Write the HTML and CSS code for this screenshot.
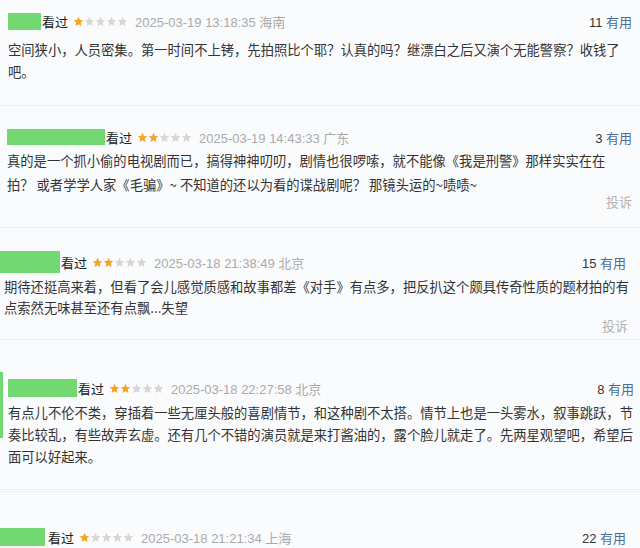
FILE: index.html
```html
<!DOCTYPE html>
<html lang="zh">
<head>
<meta charset="utf-8">
<link rel="stylesheet" href="styles.css">
</head>
<body>
<svg width="0" height="0" class="defs">
  <defs>
    <symbol id="star" viewBox="0 0 24 24"><path d="M12 1.8l3.1 6.9 7.4.7-5.6 5 1.7 7.4L12 17.9l-6.6 3.9 1.7-7.4-5.6-5 7.4-.7z"/></symbol>
  </defs>
</svg>
<div class="page">
  <section class="c c1">
    <div class="meta">
      <span class="avatar a1"></span><span class="seen">看过</span>
      <span class="stars"><svg class="on"><use href="#star"/></svg><svg><use href="#star"/></svg><svg><use href="#star"/></svg><svg><use href="#star"/></svg><svg><use href="#star"/></svg></span>
      <span class="date">2025-03-19 13:18:35 海南</span>
      <span class="useful"><b>11</b> 有用</span>
    </div>
    <p class="text">空间狭小，人员密集。第一时间不上铐，先拍照比个耶？认真的吗？继漂白之后又演个无能警察？收钱了<br>吧。</p>
  </section>
  <section class="c c2">
    <div class="meta">
      <span class="avatar a2"></span><span class="seen">看过</span>
      <span class="stars"><svg class="on"><use href="#star"/></svg><svg class="on"><use href="#star"/></svg><svg><use href="#star"/></svg><svg><use href="#star"/></svg><svg><use href="#star"/></svg></span>
      <span class="date">2025-03-19 14:43:33 广东</span>
      <span class="useful"><b>3</b> 有用</span>
    </div>
    <p class="text">真的是一个抓小偷的电视剧而已，搞得神神叨叨，剧情也很啰嗦，就不能像《我是刑警》那样实实在在<br>拍？ 或者学学人家《毛骗》~ 不知道的还以为看的谍战剧呢？ 那镜头运的~啧啧~</p>
    <div class="report">投诉</div>
  </section>
  <section class="c c3">
    <div class="meta">
      <span class="avatar a3"></span><span class="seen">看过</span>
      <span class="stars"><svg class="on"><use href="#star"/></svg><svg class="on"><use href="#star"/></svg><svg><use href="#star"/></svg><svg><use href="#star"/></svg><svg><use href="#star"/></svg></span>
      <span class="date">2025-03-18 21:38:49 北京</span>
      <span class="useful"><b>15</b> 有用</span>
    </div>
    <p class="text">期待还挺高来着，但看了会儿感觉质感和故事都差《对手》有点多，把反扒这个颇具传奇性质的题材拍的有<br>点索然无味甚至还有点飘...失望</p>
    <div class="report">投诉</div>
  </section>
  <section class="c c4">
    <div class="meta">
      <span class="avatar a4"></span><span class="seen">看过</span>
      <span class="stars"><svg class="on"><use href="#star"/></svg><svg class="on"><use href="#star"/></svg><svg><use href="#star"/></svg><svg><use href="#star"/></svg><svg><use href="#star"/></svg></span>
      <span class="date">2025-03-18 22:27:58 北京</span>
      <span class="useful"><b>8</b> 有用</span>
    </div>
    <p class="text">有点儿不伦不类，穿插着一些无厘头般的喜剧情节，和这种剧不太搭。情节上也是一头雾水，叙事跳跃，节<br>奏比较乱，有些故弄玄虚。还有几个不错的演员就是来打酱油的，露个脸儿就走了。先两星观望吧，希望后<br>面可以好起来。</p>
  </section>
  <section class="c c5">
    <div class="meta">
      <span class="avatar a5"></span><span class="seen">看过</span>
      <span class="stars"><svg class="on"><use href="#star"/></svg><svg><use href="#star"/></svg><svg><use href="#star"/></svg><svg><use href="#star"/></svg><svg><use href="#star"/></svg></span>
      <span class="date">2025-03-18 21:21:34 上海</span>
      <span class="useful"><b>22</b> 有用</span>
    </div>
  </section>
</div>
</body>
</html>
```
FILE: styles.css
```css
html, body {
  margin: 0;
  padding: 0;
  background: #fafbfd;
}
.defs { position: absolute; }
.page {
  width: 640px;
  height: 548px;
  overflow: hidden;
  display: flex;
  flex-direction: column;
  font-family: "Liberation Sans", "Noto Sans CJK SC", sans-serif;
  color: #333;
}
.c {
  border-bottom: 1px solid #eceef2;
}
.meta {
  display: flex;
  align-items: center;
  height: 22px;
  font-size: 13px;
}
.avatar {
  display: block;
  background: #72d872;
  height: 17px;
}
.seen {
  margin-left: 1px;
  color: #222;
}
.stars {
  display: flex;
  margin-left: 5px;
}
.stars svg {
  width: 11px;
  height: 11px;
  fill: #d6d6d6;
}
.stars svg.on { fill: #f4a425; }
.date {
  margin-left: 7px;
  color: #aaa;
}
.useful {
  margin-left: auto;
  color: #4a6d9c;
}
.useful b {
  font-weight: normal;
  color: #333;
}
.text {
  margin: 0;
  font-size: 13.3px;
  color: #333;
  white-space: nowrap;
  font-family: "Noto Sans CJK SC", sans-serif;
}
.report {
  text-align: right;
  font-size: 13px;
  color: #b3b3b3;
  line-height: 18px;
}

.c1 { padding: 10px 8px 21px 8px; height: 74px; }
.c1 .a1 { width: 33px; }
.c1 .text { line-height: 22px; margin-top: 7px; }

.c2 { padding: 20px 8px 0 7px; height: 101px; }
.c2 .a2 { width: 98px; height: 16px; }
.c2 .text { line-height: 24px; margin-top: 1px; }
.c2 .report { margin-top: -3px; }

.c3 { padding: 23px 12px 0 0; height: 88px; }
.c3 .a3 { width: 60px; height: 22px; }
.c3 .meta { padding-right: 2px; }
.c3 .text { line-height: 21px; margin-top: 3px; padding-left: 4px; }
.c3 .report { margin-top: 0; }

.c4 { padding: 37px 6px 0 8px; height: 112px; position: relative; border-bottom: 3px double #eceef2; }
.c4::before {
  content: "";
  position: absolute;
  left: 0;
  top: 32px;
  width: 3px;
  height: 66px;
  background: #72d872;
}
.c4 .a4 { width: 69px; height: 18px; }
.c4 .text { line-height: 22px; margin-top: 3px; }

.c5 { padding: 34px 14px 0 0; border-bottom: 0; }
.c5 .a5 { width: 45px; height: 18px; }
.c5 .seen { margin-left: 3px; }
```
